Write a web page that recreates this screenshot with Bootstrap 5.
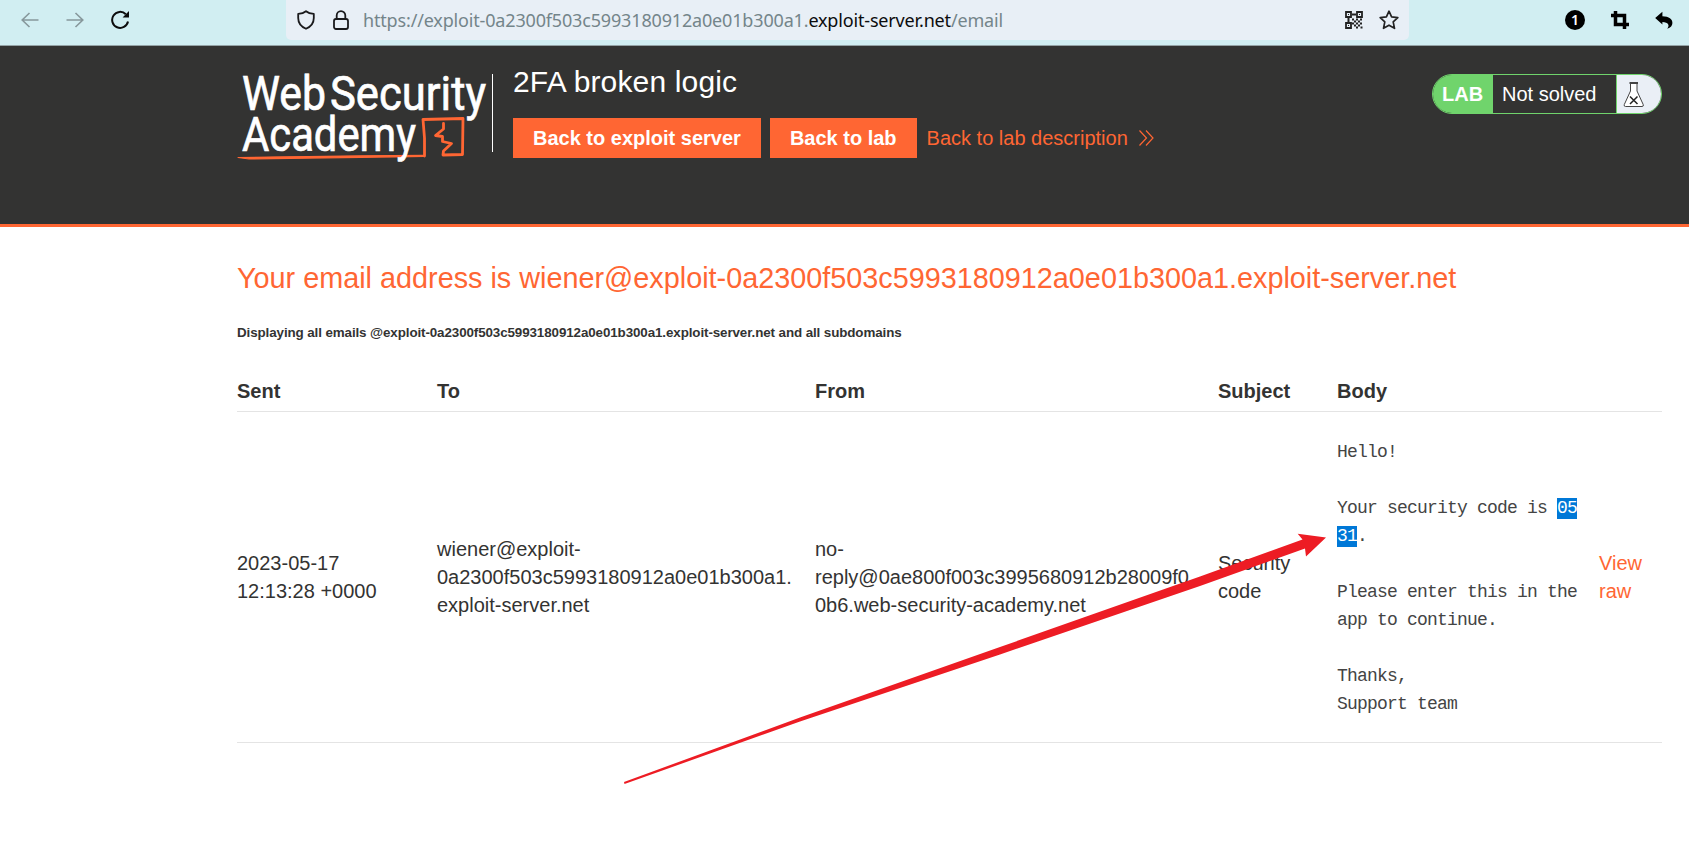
<!DOCTYPE html>
<html lang="en">
<head>
<meta charset="utf-8">
<meta name="viewport" content="width=device-width, initial-scale=1">
<title>Exploit server: email client</title>
<link href="https://cdn.jsdelivr.net/npm/bootstrap@5.3.0/dist/css/bootstrap.min.css" rel="stylesheet">
<style>
  body { font-family: "Liberation Sans", Arial, sans-serif; font-size: 20px; line-height: 28px; color: #333332; background: #fff; overflow: hidden; height: 857px; }
  svg { display: block; flex: none; }
  .toolbar { height: 46px; background: #d1eef2; border-bottom: 1px solid #94a3a6; padding: 0 15px 0 21px; }
  .toolbar-row { height: 40px; }
  .nav-icons { width: 265px; gap: 27px; }
  .address { width: 1123px; height: 40px; background: #e8eff6; border-radius: 0 0 5px 5px; padding: 0 10px 0 11px; font-family: "Noto Sans", "Open Sans", sans-serif; font-size: 18px; color: #74858a; }
  .address-text { letter-spacing: -.165px; margin-left: 13px; line-height: 40px; white-space: nowrap; }
  .address-text b { font-weight: 400; color: #0c0c0d; }
  .lock-icon { margin-left: 17px; }
  .tool-icons { gap: 26px; margin-right: 1px; }
  .lab-header { height: 181px; background: #333332; border-bottom: 3px solid #f63; padding: 0 27px 0 237px; }
  .logo { margin-top: 20px; overflow: visible; }
  .divider { width: 1px; height: 78px; margin: 28px 20px 0 0; background: #fff; }
  .lab-title { font-size: 30px; line-height: 36px; letter-spacing: .15px; margin: 18px 0; color: #fff; font-weight: 400; }
  .btn-lab { --bs-btn-bg: #f63; --bs-btn-color: #fff; --bs-btn-border-width: 0; --bs-btn-border-radius: 0; --bs-btn-padding-x: 20px; --bs-btn-padding-y: 6px; --bs-btn-font-size: 20px; --bs-btn-line-height: 28px; --bs-btn-font-weight: 700; --bs-btn-hover-bg: #e5521f; --bs-btn-hover-color: #fff; }
  .lab-buttons { gap: 9px; }
  .orange, .orange:hover { color: #f63; text-decoration: none; }
  .lab-link { margin-left: 1px; gap: 11px; }
  .lab-status { width: 230px; height: 40px; margin-top: 28px; border: 1px solid #70d46c; border-radius: 20px; overflow: hidden; color: #fff; line-height: 38px; }
  .status-tag { width: 60px; padding-left: 9px; background: #70d46c; font-weight: 700; }
  .status-text { width: 123px; padding-left: 9px; }
  .status-flask { background: #eaeff6; border-left: 1px solid #70d46c; padding: 7px 0 0 6px; }
  main { padding: 0 27px 0 237px; }
  h1.mail-address { font-size: 28.8px; line-height: 36px; margin: 33px 0 0; font-weight: 400; color: #f63; white-space: nowrap; }
  h2.mail-note { font-size: 13.4px; line-height: 20px; letter-spacing: -.108px; font-weight: 700; margin: 27px 0 34px; }
  .mail-table { --bs-table-color: #333332; table-layout: fixed; width: 1425px; margin: 0; border-color: #e4e4e4; }
  .mail-table > :not(caption) > * > * { padding: 0 22px 0 0; }
  .mail-table thead th { height: 34px; padding: 0 0 5px; line-height: 28px; vertical-align: top; }
  .mail-table td { height: 331px; vertical-align: middle; white-space: nowrap; }
  .mail-table pre { font-family: "Liberation Mono", monospace; font-size: 18px; letter-spacing: -.802px; line-height: 28px; margin: 0; padding-top: 2px; color: #444; overflow: visible; }
  .picked { background: #0078d7; color: #fff; padding-bottom: 1px; }
  .pointer-arrow { position: absolute; left: 620px; top: 530px; pointer-events: none; }
</style>
</head>
<body>
<div class="toolbar">
  <div class="toolbar-row d-flex align-items-center">
    <div class="nav-icons d-flex align-items-center">
      <svg width="18" height="18" fill="none" stroke="#87989c" stroke-width="1.600"><path d="M8.500 2 1.200 9l7.300 7M1.200 9H17.500"/></svg>
      <svg width="18" height="18" fill="none" stroke="#87989c" stroke-width="1.600"><path d="M9.500 2l7.300 7-7.300 7M16.800 9H.5"/></svg>
      <svg width="20" height="20" fill="none" stroke="#0c0c0d" stroke-width="2"><path d="M14.800 4.200A8 8 0 1 0 17 11.500"/><path d="M18 1v6.400h-6.400z" fill="#0c0c0d" stroke="none"/></svg>
    </div>
    <div class="address d-flex align-items-center">
      <svg width="18" height="20" fill="none" stroke="#1a1a1c" stroke-width="1.800" stroke-linejoin="round"><path d="M9 1.200C7 2.900 4.400 3.700 1.200 3.900V8c0 5 2.800 8.600 7.800 10.800 5-2.200 7.800-5.800 7.800-10.800V3.900C13.600 3.700 11 2.900 9 1.200z"/></svg>
      <svg class="lock-icon" width="18" height="20" fill="none" stroke="#1a1a1c" stroke-width="1.800"><rect x="2" y="9" width="14" height="10" rx="2"/><path d="M4.700 9V5.400a4.300 4.300 0 0 1 8.600 0V9"/></svg>
      <span class="address-text">https://exploit-0a2300f503c5993180912a0e01b300a1.<b>exploit-server.net</b>/email</span>
      <span class="ms-auto d-flex align-items-center gap-3">
        <svg width="18" height="18" fill="none" stroke="#222">
          <path d="M1 1h5v5H1zM12 1h5v5h-5zM1 12h5v5H1z" stroke-width="1.800"/>
          <path d="M3 3.500h1M14 3.500h1M3 14.500h1" stroke-width="1"/>
          <path d="M7 3.500h4M3.500 7v4M7 8.500h2M11 8.500h2M15 8.500h2M9 10.500h2M13 10.500h2M7 12.500h2M11 12.500h2M15 12.500h2M9 14.500h2M13 14.500h2M11 16.500h2M15.500 16.500h2" stroke-width="2"/></svg>
        <svg width="20" height="20" fill="none" stroke="#222" stroke-width="1.700" stroke-linejoin="round"><path d="M10 1.200l2.600 5.700 6.200.7-4.600 4.200 1.300 6.500L10 15.200l-5.500 3.100 1.300-6.500L1.200 7.600l6.200-.7z"/></svg>
      </span>
    </div>
    <div class="tool-icons ms-auto d-flex align-items-center">
      <svg width="20" height="20"><circle cx="10" cy="10" r="10" fill="#000"/><text x="10" y="15" text-anchor="middle" font-family="Noto Sans, sans-serif" font-size="14" font-weight="600" fill="#fff">1</text></svg>
      <svg width="18" height="18" fill="none" stroke="#000" stroke-width="3.500"><path d="M4.500 0v13.500H18M0 4.500h13.500V18"/></svg>
      <svg width="18" height="18"><path d="M7.400.8v4.400C14.200 5.300 17.400 8 17.400 12c0 2.600-1.600 4.700-5.200 5.700 2.800-3.400 1.200-6.700-4.800-6.800v2.500L.2 7z" fill="#000"/></svg>
    </div>
  </div>
</div>

<header class="lab-header d-flex align-items-start">
  <svg class="logo" width="255" height="100" font-family="Roboto, sans-serif" font-size="48" fill="#fff" stroke="#fff" stroke-width=".7">
    <g fill="none" stroke="#f63" stroke-linejoin="round" stroke-linecap="round">
      <path d="M1 91.500C60 90.300 125 89.700 187 89.300L187 90.500C125 91 60 92.500 12 93z" fill="#f63" stroke-width="1.200"/>
      <path d="M187.500 90V72L186 53.500 226 52.500 225.500 88.500 206 89 206.500 85 214.500 77.500 205.500 75.500 205.500 70.500 198.500 69.500 206.500 63 206.500 57.500" stroke-width="2.800"/>
    </g>
    <text x="5" y="44" textLength="84" lengthAdjust="spacingAndGlyphs">Web</text>
    <text x="93" y="44" textLength="156" lengthAdjust="spacingAndGlyphs">Security</text>
    <text x="5" y="84.700" textLength="174" lengthAdjust="spacingAndGlyphs">Academy</text>
  </svg>
  <div class="divider"></div>
  <div>
    <h2 class="lab-title">2FA broken logic</h2>
    <div class="lab-buttons d-flex align-items-center">
      <a class="btn btn-lab" href="#">Back to exploit server</a>
      <a class="btn btn-lab" href="#">Back to lab</a>
      <a class="lab-link orange d-flex align-items-center" href="#">Back to lab description
        <svg width="16" height="16" fill="none" stroke="#f63" stroke-width="1.200"><path d="M.5.500 7.500 8 .5 15.500M7 .5 14 8 7 15.500"/></svg></a>
    </div>
  </div>
  <div class="lab-status ms-auto d-flex">
    <div class="status-tag">LAB</div>
    <div class="status-text">Not solved</div>
    <div class="status-flask flex-grow-1">
      <svg width="22" height="26" fill="none" stroke="#444"><path d="M7.500 1v8L1.300 22.500Q.6 24.500 2.500 24.500H19q1.900 0 1.200-2L14 9V1z" fill="#fff"/><path d="M6.500 1h8.500" stroke-width="1.800"/><path d="M7 14.500l7.500 7.500M14.500 14.500 7 22" stroke="#222" stroke-width="1.500"/></svg>
    </div>
  </div>
</header>

<main>
  <h1 class="mail-address">Your email address is wiener@exploit-0a2300f503c5993180912a0e01b300a1.exploit-server.net</h1>
  <h2 class="mail-note">Displaying all emails @exploit-0a2300f503c5993180912a0e01b300a1.exploit-server.net and all subdomains</h2>
  <table class="table mail-table">
    <colgroup><col style="width:200px"><col style="width:378px"><col style="width:403px"><col style="width:119px"><col style="width:262px"><col style="width:63px"></colgroup>
    <thead><tr><th>Sent</th><th>To</th><th>From</th><th>Subject</th><th>Body</th><th></th></tr></thead>
    <tbody><tr>
      <td>2023-05-17<br>12:13:28 +0000</td>
      <td>wiener@exploit-<br>0a2300f503c5993180912a0e01b300a1.<br>exploit-server.net</td>
      <td>no-<br>reply@0ae800f003c3995680912b28009f0<br>0b6.web-security-academy.net</td>
      <td>Security<br>code</td>
      <td><pre>Hello!

Your security code is <span class="picked">05</span>
<span class="picked">31</span>.

Please enter this in the
app to continue.

Thanks,
Support team</pre></td>
      <td><a class="orange" href="#">View<br>raw</a></td>
    </tr></tbody>
  </table>
</main>

<svg class="pointer-arrow" width="710" height="258"><path d="M4 252 180 187.500 380 117 580 46.500 682.500 9.500 677.700 3.700 706 7.500 686 26.500 685 18.500 580 56 380 124.500 180 191.500 4.500 254z" fill="#ed1c24"/></svg>
<script src="https://cdn.jsdelivr.net/npm/bootstrap@5.3.0/dist/js/bootstrap.bundle.min.js"></script>
</body>
</html>
